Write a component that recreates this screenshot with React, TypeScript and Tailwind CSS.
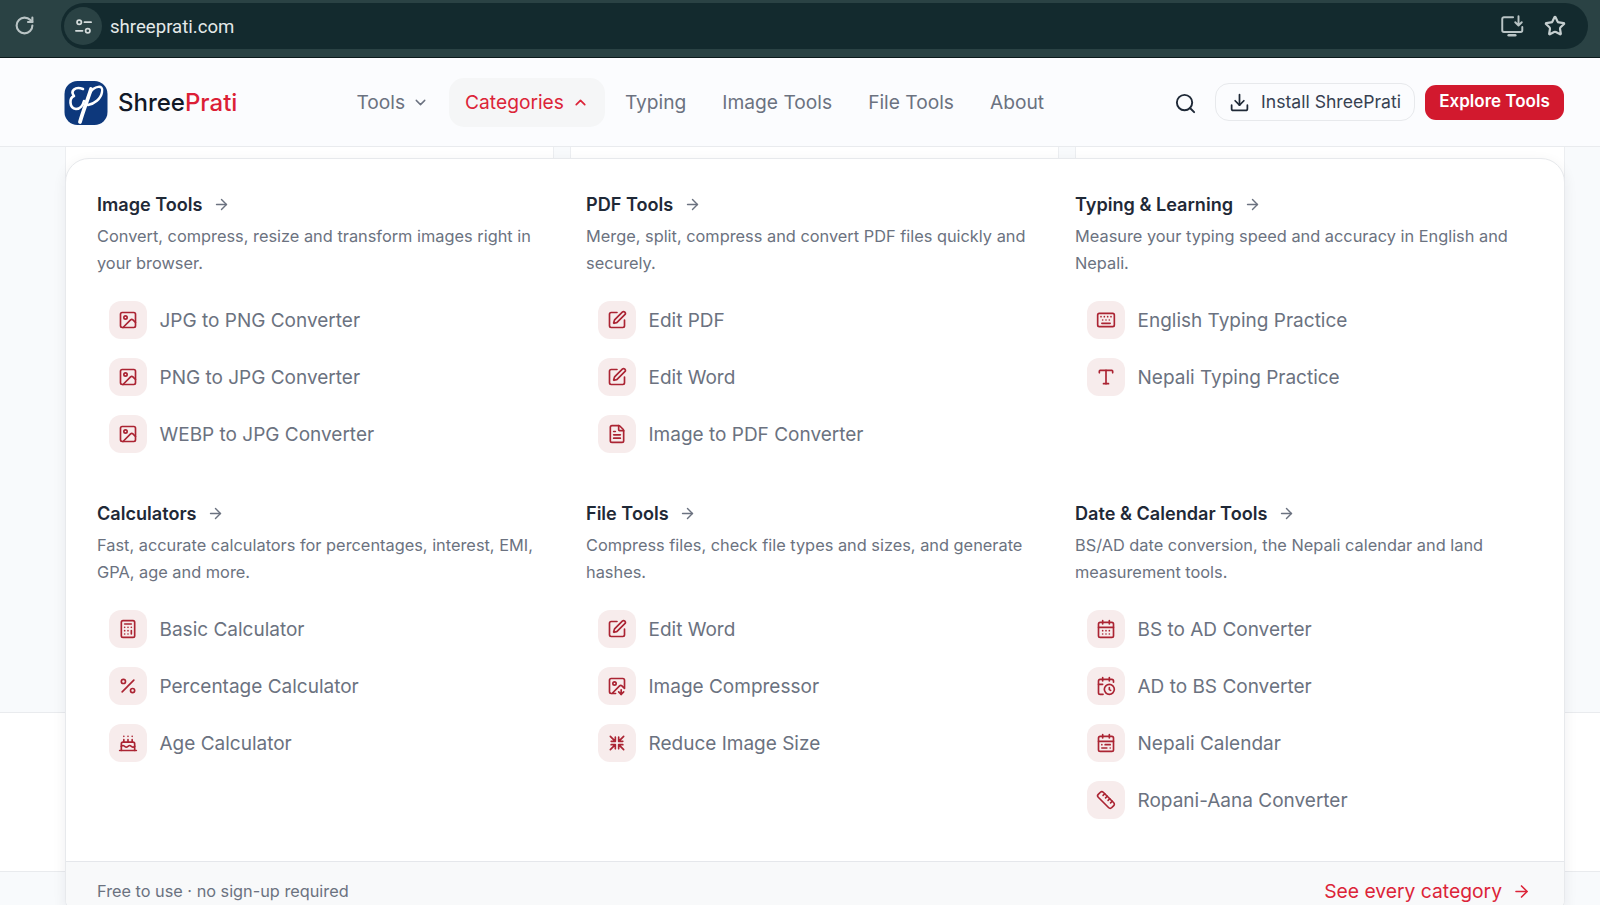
import React from "react";
import {
  ArrowRight, Calculator, Cake, CalendarClock, CalendarDays, CalendarRange, ChevronDown, ChevronUp,
  Download, FileText, Image, ImageDown, Keyboard, Percent, RotateCw, Ruler, Search, SquarePen, Star, Type,
} from "lucide-react";

const Shrink = (p: { className?: string }) => (
  <svg viewBox="0 0 24 24" fill="none" stroke="currentColor" strokeWidth={2} strokeLinecap="round" strokeLinejoin="round" className={p.className}>
    <path d="M4 4l6 6M10 5v5H5" />
    <path d="M20 4l-6 6M14 5v5h5" />
    <path d="M4 20l6-6M10 19v-5H5" />
    <path d="M20 20l-6-6M14 19v-5h5" />
  </svg>
);

type Ic = React.ComponentType<{ className?: string }>;
const sections: { title: string; desc: string[]; items: [Ic, string][] }[] = [
  { title: "Image Tools", desc: ["Convert, compress, resize and transform images right in", "your browser."],
    items: [[Image, "JPG to PNG Converter"], [Image, "PNG to JPG Converter"], [Image, "WEBP to JPG Converter"]] },
  { title: "PDF Tools", desc: ["Merge, split, compress and convert PDF files quickly and", "securely."],
    items: [[SquarePen, "Edit PDF"], [SquarePen, "Edit Word"], [FileText, "Image to PDF Converter"]] },
  { title: "Typing & Learning", desc: ["Measure your typing speed and accuracy in English and", "Nepali."],
    items: [[Keyboard, "English Typing Practice"], [Type, "Nepali Typing Practice"]] },
  { title: "Calculators", desc: ["Fast, accurate calculators for percentages, interest, EMI,", "GPA, age and more."],
    items: [[Calculator, "Basic Calculator"], [Percent, "Percentage Calculator"], [Cake, "Age Calculator"]] },
  { title: "File Tools", desc: ["Compress files, check file types and sizes, and generate", "hashes."],
    items: [[SquarePen, "Edit Word"], [ImageDown, "Image Compressor"], [Shrink, "Reduce Image Size"]] },
  { title: "Date & Calendar Tools", desc: ["BS/AD date conversion, the Nepali calendar and land", "measurement tools."],
    items: [[CalendarDays, "BS to AD Converter"], [CalendarClock, "AD to BS Converter"], [CalendarRange, "Nepali Calendar"], [Ruler, "Ropani-Aana Converter"]] },
];

const Logo = () => (
  <svg viewBox="0 0 44 44" className="h-[44px] w-[44px] shrink-0">
    <rect x="0.5" y="0" width="43" height="44" rx="13" fill="#0d387c" />
    <g fill="none" stroke="#fff" strokeLinecap="round" strokeLinejoin="round">
      <path d="M19 8C11 5 6 10 10 15 5 17 5 27 12 28 16 28 19 24 20 20" strokeWidth="2.600" />
      <path d="M27 8C24 18 19 30 16 41" strokeWidth="3.800" />
      <path d="M26 12C30 5 40 3 38 11 37 18 30 23 24 24" strokeWidth="2.400" />
    </g>
  </svg>
);

const InstallIcon = () => (
  <svg viewBox="0 0 24 24" fill="none" stroke="#b9c4c5" strokeWidth="1.800" strokeLinecap="round" strokeLinejoin="round" className="h-[26px] w-[26px]">
    <path d="M13 4H4.500A1.500 1.500 0 0 0 3 5.500V16a1.500 1.500 0 0 0 1.500 1.500H20a1.500 1.500 0 0 0 1.500-1.500v-3" />
    <path d="M9 20.500h6" strokeWidth="2.400" />
    <path d="M18 3v8M15 8.500l3 3 3-3" />
  </svg>
);

const TuneIcon = () => (
  <svg viewBox="0 0 20 20" fill="none" stroke="#d5dcdc" strokeWidth="1.800" strokeLinecap="round" className="h-[19px] w-[19px]">
    <circle cx="5.500" cy="5.500" r="2.300" />
    <path d="M11 5.500h7M2 14.500h7" />
    <circle cx="14.500" cy="14.500" r="2.300" />
  </svg>
);

export default function App() {
  return (
    <div className="relative flex h-[905px] w-[1600px] flex-col overflow-hidden bg-[#f8fafc] font-['Inter',sans-serif]">
      <div className="flex h-[58px] shrink-0 items-start border-b border-[#0c1a1c] bg-[#2a4244]">
        <div className="flex h-[50px] w-[61px] shrink-0 items-center justify-center pr-3">
          <RotateCw className="h-[21px] w-[21px] text-[#b9c4c5]" strokeWidth={2.4} />
        </div>
        <div className="mt-[3px] flex h-[46px] w-[1527px] items-center rounded-full bg-[#132a2e] pl-[3px] pr-[22px]">
          <div className="flex h-[38px] w-[38px] items-center justify-center rounded-full bg-[#2a4244]">
            <TuneIcon />
          </div>
          <span className="ml-[8px] pt-[3px] font-['Roboto',sans-serif] text-[18.6px] text-[#e3e9e9]">shreeprati.com</span>
          <div className="ml-auto flex items-center gap-[19px]">
            <InstallIcon />
            <Star className="h-[22px] w-[22px] text-[#c5cecf]" strokeWidth={2.4} />
          </div>
        </div>
      </div>

      <header className="flex h-[89px] shrink-0 items-center border-b border-[#e9ebee] bg-[#fbfcfe] pl-16 pr-9 pt-[2px]">
        <div className="flex items-center gap-[10px]">
          <Logo />
          <span className="text-[24px] font-medium leading-8 text-[#111827]">
            Shree<span className="text-[#dc1f36]">Prati</span>
          </span>
        </div>
        <nav className="mb-[2px] ml-[103px] flex items-center gap-1 text-[19.2px] text-[#6b7280]">
          <a className="flex h-[49px] items-center gap-[7px] px-4">Tools<ChevronDown className="h-[17px] w-[17px]" strokeWidth={2} /></a>
          <a className="flex h-[49px] items-center gap-[8px] rounded-[15px] bg-[#f5f6f7] px-4 text-[#dc2438]">Categories<ChevronUp className="h-[17px] w-[17px]" strokeWidth={2.4} /></a>
          <a className="flex h-[49px] items-center px-4">Typing</a>
          <a className="flex h-[49px] items-center px-4">Image Tools</a>
          <a className="flex h-[49px] items-center px-4">File Tools</a>
          <a className="flex h-[49px] items-center px-4">About</a>
        </nav>
        <Search className="ml-auto h-[23px] w-[23px] text-[#1f2937]" strokeWidth={2} />
        <button className="mb-[2px] ml-[18px] flex h-[38px] w-[200px] items-center justify-center gap-[11px] rounded-[14px] border border-[#e7e9ec] bg-[#fbfcfe] text-[17.6px] text-[#374151]">
          <Download className="h-[21px] w-[21px] text-[#1f2937]" strokeWidth={2} />
          Install ShreePrati
        </button>
        <button className="mb-[2px] ml-[10px] flex h-[35px] w-[139px] items-center justify-center rounded-[11px] bg-[#d2192e] text-[17px] font-semibold text-white">
          Explore Tools
        </button>
      </header>

      <main className="relative flex-1">
        <div className="flex h-[566px] gap-[16px] border-b border-[#e9ebee] pl-[65px] pr-[35px]">
          <div className="w-[489px] border-x border-[#eceef1] bg-white" />
          <div className="w-[489px] border-x border-[#eceef1] bg-white" />
          <div className="w-[490px] border-x border-[#eceef1] bg-white" />
        </div>
        <div className="h-[159px] border-b border-[#e9ebee] bg-white" />

        <section className="absolute left-[65px] top-[11px] w-[1500px] overflow-hidden rounded-[24px] border border-[#e7e9ec] bg-white shadow-[0_4px_14px_rgba(15,23,42,0.07)]">
          <div className="grid grid-cols-3 gap-x-[31px] gap-y-[38px] px-[31px] pb-[33px] pt-8">
            {sections.map((s) => (
              <div key={s.title}>
                <h3 className="flex h-7 items-center gap-[10.5px] pb-[2px] text-[18.1px] font-semibold leading-7 text-[#1f2937]">
                  {s.title}
                  <ArrowRight className="h-[17px] w-[17px] text-[#6b7280]" strokeWidth={2} />
                </h3>
                <p className="mt-1 h-[54px] whitespace-nowrap text-[16.35px] leading-[27px] text-[#6b7280]">
                  {s.desc[0]}
                  <br />
                  {s.desc[1]}
                </p>
                <ul className="mt-[14px]">
                  {s.items.map(([I, label], i) => (
                    <li key={i} className="flex h-[57px] items-center gap-[12.5px] px-3 text-[19px] text-[#6b7280]">
                      <span className="flex h-[38px] w-[38px] shrink-0 items-center justify-center rounded-[12px] bg-[#f7ecec] text-[#ab2433]">
                        <I className="h-5 w-5" />
                      </span>
                      <span className="pt-[3px]">{label}</span>
                    </li>
                  ))}
                </ul>
              </div>
            ))}
          </div>
          <div className="flex h-[60px] items-start justify-between border-t border-[#e5e7eb] bg-[#f8f9fa] pl-[31px] pr-[33px] pt-[17px]">
            <span className="text-[16.3px] leading-6 text-[#6b7280]">Free to use · no sign-up required</span>
            <span className="flex items-center gap-[10px] text-[19.3px] leading-6 text-[#dc2438]">
              See every category
              <ArrowRight className="h-[19px] w-[19px]" strokeWidth={2} />
            </span>
          </div>
        </section>
      </main>
    </div>
  );
}
